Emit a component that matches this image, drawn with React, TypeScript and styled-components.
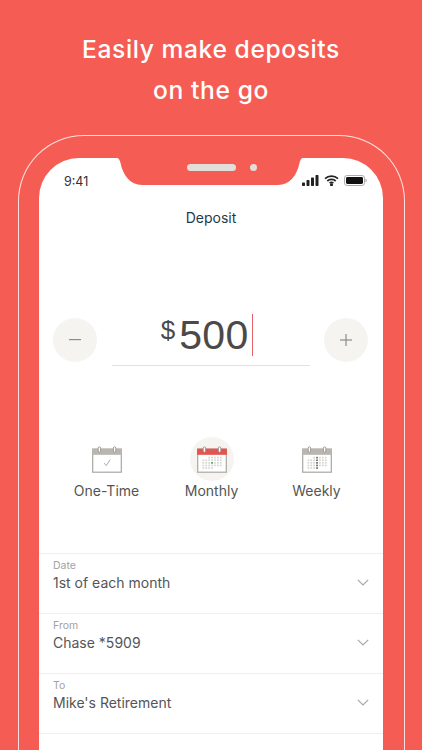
import React from "react";
import styled, { createGlobalStyle } from "styled-components";

const GlobalStyle = createGlobalStyle`
  html, body {
    margin: 0;
    padding: 0;
    background: #f55d54;
  }
  * {
    box-sizing: border-box;
  }
`;

const Page = styled.div`
  width: 422px;
  height: 750px;
  overflow: hidden;
  background: #f55d54;
  font-family: Inter, "Noto Sans", sans-serif;
`;

const Headline = styled.h1`
  margin: 0;
  padding-top: 29px;
  height: 135px;
  color: #fff;
  font-size: 24.6px;
  line-height: 41px;
  font-weight: 500;
  letter-spacing: 0.6px;
  text-align: center;
`;

const PhoneFrame = styled.div`
  width: 387px;
  height: 640px;
  margin-left: 18px;
  padding: 22px 20px 0 20px;
  border: 1.5px solid rgba(255, 255, 255, 0.82);
  border-bottom: none;
  border-radius: 66px 66px 0 0;
`;

const Screen = styled.div`
  position: relative;
  width: 344px;
  height: 600px;
  background: #fff;
  border-radius: 40px 40px 0 0;
`;

const Notch = styled.div`
  position: absolute;
  top: -1px;
  left: 74px;
  width: 194px;
  height: 28px;
  display: flex;
  align-items: flex-start;
  justify-content: center;
  gap: 14px;
  padding: 7px 0 0 24px;
`;

const NotchShape = styled.svg`
  position: absolute;
  top: 0;
  left: 0;
`;

const Speaker = styled.div`
  position: relative;
  width: 49px;
  height: 7px;
  border-radius: 4px;
  background: #e2dfda;
`;

const Camera = styled.div`
  position: relative;
  width: 7px;
  height: 7px;
  border-radius: 50%;
  background: #e2dfda;
`;

const StatusBar = styled.div`
  display: flex;
  align-items: center;
  justify-content: space-between;
  height: 46px;
  padding: 0 16px 0 25px;
`;

const Time = styled.span`
  font-size: 12.5px;
  color: #333;
`;

const StatusIcons = styled.div`
  display: flex;
  align-items: center;
  gap: 5px;
  margin-top: -1px;
`;

const Title = styled.div`
  height: 28px;
  text-align: center;
  font-size: 14px;
  line-height: 28px;
  color: #1f3a4d;
`;

const AmountRow = styled.div`
  display: flex;
  align-items: center;
  justify-content: space-between;
  margin-top: 81px;
  padding: 0 15px 0 14px;
`;

const RoundButton = styled.div`
  width: 44px;
  height: 44px;
  border-radius: 50%;
  background: #f5f4f1;
  display: flex;
  align-items: center;
  justify-content: center;
`;

const AmountField = styled.div`
  width: 198px;
  height: 49px;
  margin-top: 4px;
  padding-right: 7px;
  display: flex;
  align-items: flex-start;
  justify-content: center;
  border-bottom: 1px solid #e3e1dd;
  color: #4c4a48;
  font-family: "Liberation Sans", Arial, sans-serif;
`;

const Dollar = styled.span`
  font-size: 26px;
  line-height: 30px;
  margin-top: -2px;
  margin-right: 4px;
`;

const Digits = styled.span`
  font-size: 41px;
  line-height: 42px;
  letter-spacing: 0.4px;
  margin-top: -3px;
`;

const Caret = styled.span`
  flex: none;
  width: 1.5px;
  height: 42px;
  margin-left: 3px;
  margin-top: -3px;
  background: #e4636a;
`;

const FrequencyRow = styled.div`
  display: grid;
  grid-template-columns: repeat(3, 105px);
  justify-content: center;
  margin-top: 71px;
  padding-left: 1px;
`;

const FrequencyItem = styled.div`
  display: flex;
  flex-direction: column;
  align-items: center;
`;

const IconHalo = styled.div<{ $active?: boolean }>`
  width: 44px;
  height: 44px;
  border-radius: 50%;
  display: flex;
  align-items: center;
  justify-content: center;
  background: ${({ $active }) => ($active ? "#f5f4f1" : "transparent")};
`;

const FrequencyLabel = styled.span`
  font-size: 14px;
  line-height: 20px;
  color: #555;
`;

const Fields = styled.div`
  margin-top: 52px;
`;

const FieldRow = styled.div`
  height: 60px;
  padding: 5px 14px 0 14px;
  border-top: 1px solid #f0efec;
  display: flex;
  align-items: flex-start;
  justify-content: space-between;
`;

const FieldText = styled.div`
  display: flex;
  flex-direction: column;
`;

const FieldLabel = styled.span`
  font-size: 10.5px;
  line-height: 13px;
  color: #a3a19e;
`;

const FieldValue = styled.span`
  margin-top: 1px;
  font-size: 14px;
  line-height: 20px;
  color: #555;
`;

const Chevron = styled.svg`
  margin-top: 20px;
`;

const Signal = () => (
  <svg width="17" height="11" viewBox="0 0 17 11">
    <rect x="0" y="7.5" width="3" height="3.5" rx="0.7" fill="#222" />
    <rect x="4.5" y="5" width="3" height="6" rx="0.7" fill="#222" />
    <rect x="9" y="2.5" width="3" height="8.5" rx="0.7" fill="#222" />
    <rect x="13.5" y="0" width="3" height="11" rx="0.7" fill="#222" />
  </svg>
);

const Wifi = () => (
  <svg width="15" height="11" viewBox="0 0 15 11" fill="none" stroke="#222" strokeWidth="1.7">
    <path d="M1 3.6 C4.6 0.3 10.4 0.3 14 3.6" />
    <path d="M3.3 6 C5.6 3.9 9.4 3.9 11.7 6" />
    <path d="M5.6 8.2 C6.7 7.3 8.3 7.3 9.4 8.2" />
    <circle cx="7.5" cy="9.8" r="0.7" fill="#222" />
  </svg>
);

const Battery = () => (
  <svg width="23" height="11" viewBox="0 0 23 11">
    <rect x="0.5" y="0.5" width="20" height="10" rx="2.6" fill="none" stroke="#aaa" />
    <rect x="2" y="2" width="17" height="7" rx="1.4" fill="#111" />
    <path d="M21.5 3.8 C22.4 4.1 22.8 4.7 22.8 5.5 C22.8 6.3 22.4 6.9 21.5 7.2 Z" fill="#aaa" />
  </svg>
);

type CalendarKind = "once" | "month" | "week";

const Calendar = ({ kind }: { kind: CalendarKind }) => {
  const header = kind === "month" ? "#e25550" : "#b9b6b1";
  const dots: React.ReactNode[] = [];
  if (kind !== "once") {
    for (let row = 0; row < 5; row++) {
      for (let col = 0; col < 7; col++) {
        if (row === 4 && col > 3) continue;
        if (row === 0 && col < 2) continue;
        let fill = "#d6d5d2";
        if (kind === "week" && col === 3) fill = "#6b6a68";
        if (kind === "month" && row === 2 && col === 3) fill = "#3fa14a";
        dots.push(
          <rect key={`${row}-${col}`} x={5.5 + col * 2.9} y={10.8 + row * 2.6} width="1.7" height="1.7" fill={fill} />
        );
      }
    }
  }
  return (
    <svg width="30" height="27" viewBox="0 0 30 27">
      <rect x="0.7" y="3.2" width="28.6" height="23" fill="#fff" stroke="#a9a7a3" strokeWidth="1.2" />
      <rect x="0.7" y="3.2" width="28.6" height="5" fill={header} stroke={header} strokeWidth="1.2" />
      <rect x="6.2" y="0.8" width="2.4" height="5.4" rx="1.2" fill="#fff" stroke="#8e8c88" strokeWidth="0.8" />
      <rect x="21.4" y="0.8" width="2.4" height="5.4" rx="1.2" fill="#fff" stroke="#8e8c88" strokeWidth="0.8" />
      {kind === "once" && <path d="M12 17 L14.2 19.6 L18.2 13.6" fill="none" stroke="#a3a19e" strokeWidth="0.9" />}
      {dots}
    </svg>
  );
};

const frequencies: { kind: CalendarKind; label: string }[] = [
  { kind: "once", label: "One-Time" },
  { kind: "month", label: "Monthly" },
  { kind: "week", label: "Weekly" },
];

const fields = [
  { label: "Date", value: "1st of each month" },
  { label: "From", value: "Chase *5909" },
  { label: "To", value: "Mike's Retirement" },
];

export default function App() {
  return (
    <Page>
      <GlobalStyle />
      <Headline>
        Easily make deposits
        <br />
        on the go
      </Headline>
      <PhoneFrame>
        <Screen>
          <Notch>
            <NotchShape width="194" height="28" viewBox="0 0 194 28">
              <path
                d="M0 0 C5 0 6.5 2 7.5 6 C10 18 17 28 29 28 H165 C177 28 184 18 186.5 6 C187.5 2 189 0 194 0 Z"
                fill="#f55d54"
              />
            </NotchShape>
            <Speaker />
            <Camera />
          </Notch>
          <StatusBar>
            <Time>9:41</Time>
            <StatusIcons>
              <Signal />
              <Wifi />
              <Battery />
            </StatusIcons>
          </StatusBar>
          <Title>Deposit</Title>
          <AmountRow>
            <RoundButton>
              <svg width="12" height="2" viewBox="0 0 12 2">
                <rect width="12" height="1.2" fill="#8f8d8a" />
              </svg>
            </RoundButton>
            <AmountField>
              <Dollar>$</Dollar>
              <Digits>500</Digits>
              <Caret />
            </AmountField>
            <RoundButton>
              <svg width="12" height="12" viewBox="0 0 12 12">
                <rect y="5.4" width="12" height="1.2" fill="#8f8d8a" />
                <rect x="5.4" width="1.2" height="12" fill="#8f8d8a" />
              </svg>
            </RoundButton>
          </AmountRow>
          <FrequencyRow>
            {frequencies.map((f) => (
              <FrequencyItem key={f.kind}>
                <IconHalo $active={f.kind === "month"}>
                  <Calendar kind={f.kind} />
                </IconHalo>
                <FrequencyLabel>{f.label}</FrequencyLabel>
              </FrequencyItem>
            ))}
          </FrequencyRow>
          <Fields>
            {fields.map((f) => (
              <FieldRow key={f.label}>
                <FieldText>
                  <FieldLabel>{f.label}</FieldLabel>
                  <FieldValue>{f.value}</FieldValue>
                </FieldText>
                <Chevron width="12" height="7" viewBox="0 0 12 7" fill="none" stroke="#a9a7a3" strokeWidth="1.2">
                  <path d="M0.8 0.8 L6 6 L11.2 0.8" />
                </Chevron>
              </FieldRow>
            ))}
            <FieldRow />
          </Fields>
        </Screen>
      </PhoneFrame>
    </Page>
  );
}
